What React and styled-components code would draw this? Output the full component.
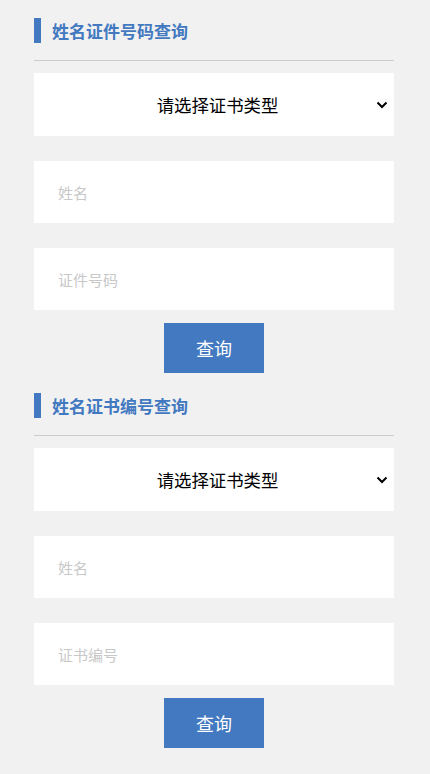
import React, { useState } from 'react'
import styled, { createGlobalStyle } from 'styled-components'

const colors = {
  page: '#f1f1f1',
  blue: '#4279c0',
  line: '#cccccc',
  placeholder: '#c8c8c8',
}

const GlobalStyle = createGlobalStyle`
  html, body {
    margin: 0;
    padding: 0;
    background-color: ${colors.page};
    font-family: "Microsoft YaHei", "Noto Sans CJK SC", "Noto Sans", sans-serif;
  }
  * { box-sizing: border-box; }
`

const Page = styled.div`
  padding: 18px 36px 26px 34px;
  min-height: 774px;
`
const Section = styled.section`
  display: flex;
  flex-direction: column;
  & + & {
    margin-top: 20px;
  }
`
const Title = styled.h2`
  display: flex;
  align-items: center;
  gap: 11px;
  height: 25px;
  margin: 0;
  font-size: 17px;
  font-weight: bold;
  color: ${colors.blue};
  &::before {
    content: '';
    width: 7px;
    height: 25px;
    background-color: ${colors.blue};
  }
`
const Divider = styled.hr`
  margin: 17px 0 12px 0;
  border: none;
  border-top: solid 1px ${colors.line};
`
const SelectWrapper = styled.div`
  position: relative;
  height: 63px;
  background-color: #fff;
`
const Select = styled.select`
  appearance: none;
  width: 100%;
  height: 100%;
  border: none;
  outline: none;
  background: transparent;
  padding: 0 0 0 7px;
  font-family: inherit;
  font-size: 17.4px;
  color: #000;
  text-align: center;
  text-align-last: center;
`
const Chevron = styled.svg`
  position: absolute;
  right: 6px;
  top: 50%;
  transform: translateY(-50%);
  pointer-events: none;
`
const Input = styled.input`
  height: 62px;
  margin-top: 25px;
  border: none;
  outline: none;
  background-color: #fff;
  padding: 0 24px;
  font-family: inherit;
  font-size: 15px;
  color: #333;
  &::placeholder {
    color: ${colors.placeholder};
  }
`
const Button = styled.button`
  align-self: center;
  width: 100px;
  height: 50px;
  margin-top: 13px;
  border: none;
  background-color: ${colors.blue};
  color: #fff;
  font-family: inherit;
  font-size: 18px;
  cursor: pointer;
`

const QueryForm = ({ title, fields }) => {
  const [type, setType] = useState('')
  return (
    <Section>
      <Title>{title}</Title>
      <Divider />
      <SelectWrapper>
        <Select value={type} onChange={(e) => setType(e.target.value)}>
          <option value="">请选择证书类型</option>
        </Select>
        <Chevron width="12" height="12" viewBox="0 0 12 12">
          <path d="M1.5 3.5 L6 8 L10.5 3.5" fill="none" stroke="#000" strokeWidth="2" />
        </Chevron>
      </SelectWrapper>
      {fields.map((f) => (
        <Input key={f} placeholder={f} />
      ))}
      <Button>查询</Button>
    </Section>
  )
}

export default function App() {
  return (
    <>
      <GlobalStyle />
      <Page>
        <QueryForm title="姓名证件号码查询" fields={['姓名', '证件号码']} />
        <QueryForm title="姓名证书编号查询" fields={['姓名', '证书编号']} />
      </Page>
    </>
  )
}
